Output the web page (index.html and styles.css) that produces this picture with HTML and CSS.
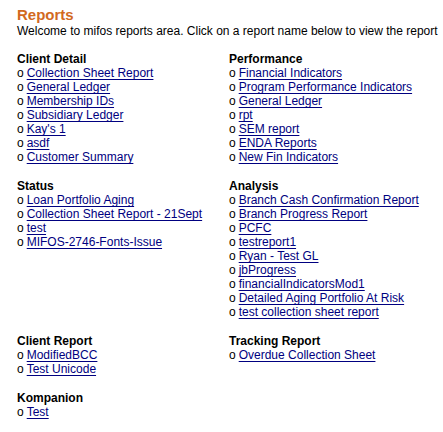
FILE: index.html
```html
<!DOCTYPE html>
<html lang="en">
<head>
  <meta charset="UTF-8" />
  <title>Reports</title>
  <link rel="stylesheet" href="styles.css">
</head>
<body>

  <div class="page">
    <h1 class="title">Reports</h1>
    <p class="intro">Welcome to mifos reports area. Click on a report name below to view the report</p>

    <div class="categories">
      <div class="category">
        <h2>Client Detail</h2>
        <ul>
          <li><a href="#">Collection Sheet Report</a></li>
          <li><a href="#">General Ledger</a></li>
          <li><a href="#">Membership IDs</a></li>
          <li><a href="#">Subsidiary Ledger</a></li>
          <li><a href="#">Kay's 1</a></li>
          <li><a href="#">asdf</a></li>
          <li><a href="#">Customer Summary</a></li>
        </ul>
      </div>
      <div class="category">
        <h2>Performance</h2>
        <ul>
          <li><a href="#">Financial Indicators</a></li>
          <li><a href="#">Program Performance Indicators</a></li>
          <li><a href="#">General Ledger</a></li>
          <li><a href="#">rpt</a></li>
          <li><a href="#">SEM report</a></li>
          <li><a href="#">ENDA Reports</a></li>
          <li><a href="#">New Fin Indicators</a></li>
        </ul>
      </div>

      <div class="category">
        <h2>Status</h2>
        <ul>
          <li><a href="#">Loan Portfolio Aging</a></li>
          <li><a href="#">Collection Sheet Report - 21Sept</a></li>
          <li><a href="#">test</a></li>
          <li><a href="#">MIFOS-2746-Fonts-Issue</a></li>
        </ul>
      </div>
      <div class="category">
        <h2>Analysis</h2>
        <ul>
          <li><a href="#">Branch Cash Confirmation Report</a></li>
          <li><a href="#">Branch Progress Report</a></li>
          <li><a href="#">PCFC</a></li>
          <li><a href="#">testreport1</a></li>
          <li><a href="#">Ryan - Test GL</a></li>
          <li><a href="#">jbProgress</a></li>
          <li><a href="#">financialIndicatorsMod1</a></li>
          <li><a href="#">Detailed Aging Portfolio At Risk</a></li>
          <li><a href="#">test collection sheet report</a></li>
        </ul>
      </div>

      <div class="category">
        <h2>Client Report</h2>
        <ul>
          <li><a href="#">ModifiedBCC</a></li>
          <li><a href="#">Test Unicode</a></li>
        </ul>
      </div>
      <div class="category">
        <h2>Tracking Report</h2>
        <ul>
          <li><a href="#">Overdue Collection Sheet</a></li>
        </ul>
      </div>

      <div class="category">
        <h2>Kompanion</h2>
        <ul>
          <li><a href="#">Test</a></li>
        </ul>
      </div>
    </div>
  </div>

</body>
</html>
```

FILE: styles.css
```css
body {
  margin: 0;
  padding: 0;
  background: #fff;
  color: #000;
  font-family: "Liberation Sans", Arial, sans-serif;
  font-size: 12px;
  line-height: 14px;
}
.page {
  padding: 6px 0 0 17px;
}
.title {
  margin: 0;
  font-size: 15px;
  line-height: 18px;
  font-weight: bold;
  color: #d2691e;
}
.intro {
  margin: 0 0 14px;
  white-space: nowrap;
}
.categories {
  display: grid;
  grid-template-columns: 212px 1fr;
  row-gap: 15px;
}
.category h2 {
  margin: 0;
  font-size: 12px;
  line-height: 14px;
  font-weight: bold;
}
.category ul {
  margin: 0;
  padding: 0;
  list-style: none;
}
.category li::before {
  content: "o";
  margin-right: 3px;
}
.category a {
  color: #000080;
  text-decoration: underline;
  text-underline-offset: 2px;
}
```
